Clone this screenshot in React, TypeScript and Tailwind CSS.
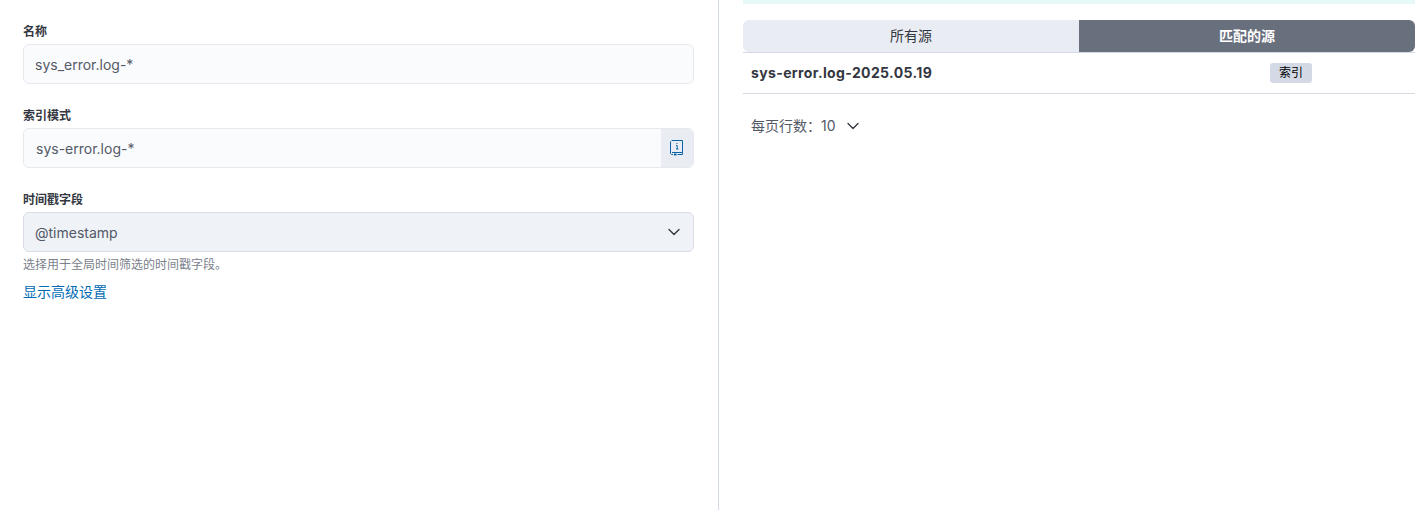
import { ChevronDown } from 'lucide-react';

const fontStack = "font-['Inter','Noto_Sans_CJK_SC',sans-serif]";

const BookIcon = () => (
  <svg width="16" height="16" viewBox="0 0 16 16" fill="none" stroke="#0b64a8" strokeWidth="1">
    <path d="M2.5 0.5h11v12h-10.5" />
    <path d="M1.5 1.5v12l1 1h1.5M8.5 14.5h5v-2" />
    <path d="M5 13.5h2.5v2h-2.5z" fill="#0b64a8" stroke="none" />
    <path d="M8 3v1M7 5.5h1.2v3.5M7 9h2.4" />
  </svg>
);

const FieldLabel = ({ text }: { text: string }) => (
  <label className="mb-1 block h-4 text-xs leading-4 font-semibold text-[#343741]">{text}</label>
);

const LeftForm = () => (
  <div className="h-[510px] w-[719px] shrink-0 border-r border-[#d3dae6] pt-6 pr-6 pl-[23px]">
    <FieldLabel text="名称" />
    <div className="flex h-10 items-center rounded-md border border-[#e6e8ee] bg-[#fafbfd] px-[11px] pt-0.5 text-sm text-[#535966]">
      sys_error.log-*
    </div>

    <div className="mt-6">
      <FieldLabel text="索引模式" />
      <div className="flex h-10 items-center overflow-hidden rounded-md border border-[#e6e8ee] bg-[#fafbfd] text-sm text-[#535966]">
        <span className="flex-1 pt-0.5 pl-3">sys-error.log-*</span>
        <span className="flex h-full w-8 items-center justify-center bg-[#e9edf3]">
          <BookIcon />
        </span>
      </div>
    </div>

    <div className="mt-6">
      <FieldLabel text="时间戳字段" />
      <div className="flex h-10 items-center justify-between rounded-md border border-[#d9dde5] bg-[#eff2f7] pr-[5px] pl-[11px] text-sm text-[#535966]">
        <span className="pt-0.5">@timestamp</span>
        <ChevronDown className="mr-1 h-5 w-5 text-[#343741]" strokeWidth={1.6} />
      </div>
      <p className="mt-[5px] h-4 text-xs leading-4 text-[#7b818c]">选择用于全局时间筛选的时间戳字段。</p>
    </div>

    <a className="mt-[9px] block text-sm leading-5 text-[#006bb4]">显示高级设置</a>
  </div>
);

const RightPanel = () => (
  <div className="w-[672px] shrink-0 pl-6">
    <div className="h-1 w-[672px] bg-[#e6f9f7]" />

    <div className="mt-4 grid h-[33px] w-[672px] grid-cols-2 border-b border-[#d3dae6] text-sm">
      <div className="flex items-center justify-center rounded-tl-md rounded-bl-md bg-[#e9edf3] text-[#343741]">所有源</div>
      <div className="flex items-center justify-center rounded-tr-md rounded-br-md bg-[#69707d] font-bold text-white">匹配的源</div>
    </div>

    <div className="flex h-[41px] w-[672px] items-center border-b border-[#d9d9e3]">
      <span className="w-[527px] pl-2 text-sm font-bold tracking-[0.37px] text-[#343741]">sys-error.log-2025.05.19</span>
      <span className="rounded-[3px] bg-[#d3dae6] px-[9px] text-xs leading-5 text-[#000]">索引</span>
    </div>

    <div className="mt-[22px] flex items-center pl-2 text-sm leading-5 text-[#535966]">
      <span>每页行数：10</span>
      <ChevronDown className="ml-[7px] h-5 w-5 text-[#343741]" strokeWidth={1.6} />
    </div>
  </div>
);

export default function App() {
  return (
    <div className={`flex h-[510px] w-[1428px] overflow-hidden bg-white ${fontStack}`}>
      <LeftForm />
      <RightPanel />
    </div>
  );
}
